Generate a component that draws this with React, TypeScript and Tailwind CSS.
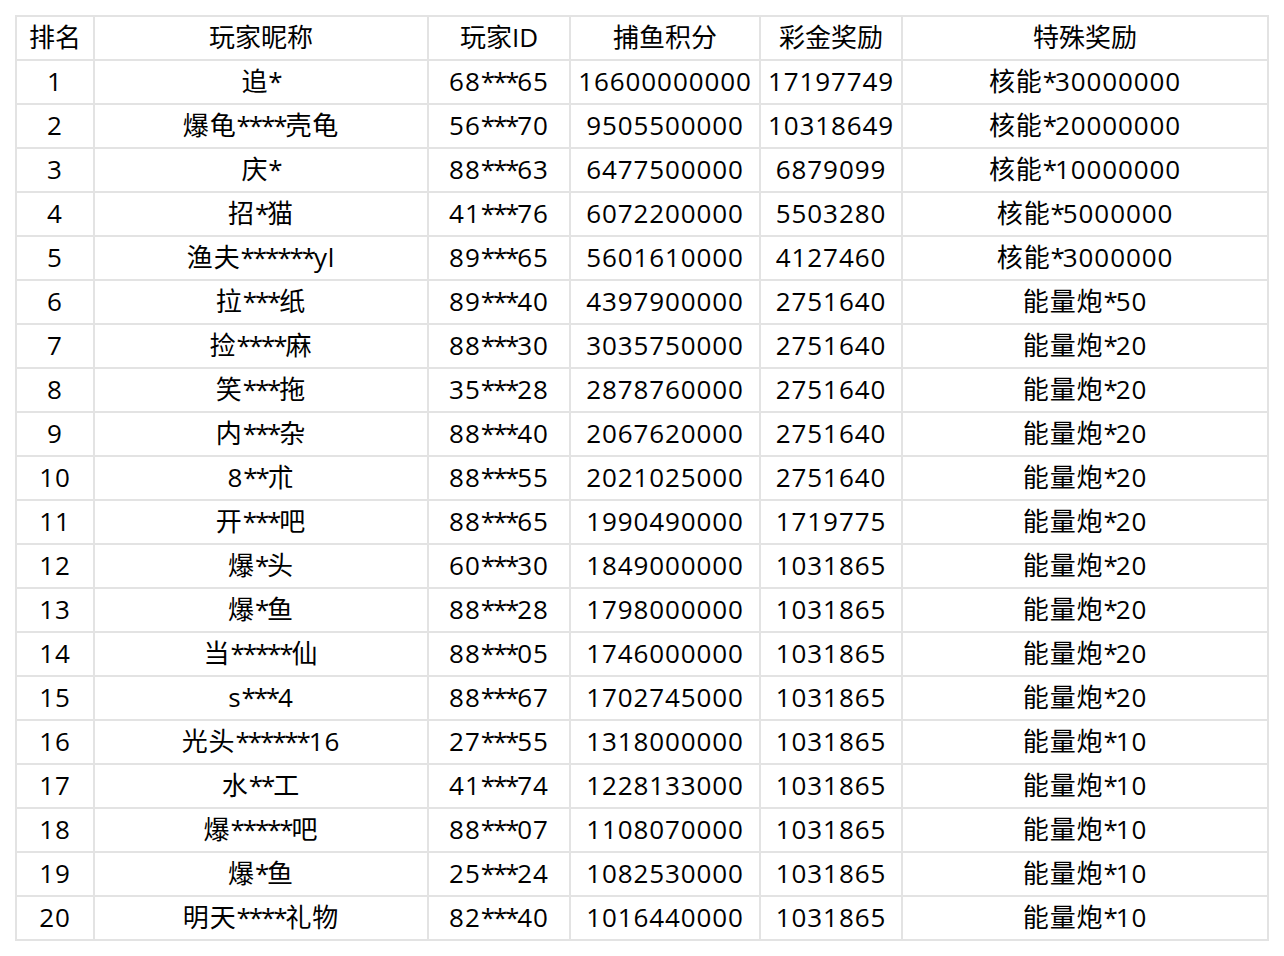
import React from "react";

const header = ["排名", "玩家昵称", "玩家ID", "捕鱼积分", "彩金奖励", "特殊奖励"];

const rows: string[][] = [
    ["1", "追*", "68***65", "16600000000", "17197749", "核能*30000000"],
    ["2", "爆龟****壳龟", "56***70", "9505500000", "10318649", "核能*20000000"],
    ["3", "庆*", "88***63", "6477500000", "6879099", "核能*10000000"],
    ["4", "招*猫", "41***76", "6072200000", "5503280", "核能*5000000"],
    ["5", "渔夫******yl", "89***65", "5601610000", "4127460", "核能*3000000"],
    ["6", "拉***纸", "89***40", "4397900000", "2751640", "能量炮*50"],
    ["7", "捡****麻", "88***30", "3035750000", "2751640", "能量炮*20"],
    ["8", "笑***拖", "35***28", "2878760000", "2751640", "能量炮*20"],
    ["9", "内***杂", "88***40", "2067620000", "2751640", "能量炮*20"],
    ["10", "8**朮", "88***55", "2021025000", "2751640", "能量炮*20"],
    ["11", "开***吧", "88***65", "1990490000", "1719775", "能量炮*20"],
    ["12", "爆*头", "60***30", "1849000000", "1031865", "能量炮*20"],
    ["13", "爆*鱼", "88***28", "1798000000", "1031865", "能量炮*20"],
    ["14", "当*****仙", "88***05", "1746000000", "1031865", "能量炮*20"],
    ["15", "s***4", "88***67", "1702745000", "1031865", "能量炮*20"],
    ["16", "光头******16", "27***55", "1318000000", "1031865", "能量炮*10"],
    ["17", "水**工", "41***74", "1228133000", "1031865", "能量炮*10"],
    ["18", "爆*****吧", "88***07", "1108070000", "1031865", "能量炮*10"],
    ["19", "爆*鱼", "25***24", "1082530000", "1031865", "能量炮*10"],
    ["20", "明天****礼物", "82***40", "1016440000", "1031865", "能量炮*10"],
];

// masked names/ids: the asterisks sit tighter than Open Sans sets them
function Masked({ text }: { text: string }) {
    const parts = text.split(/(\*+)/).filter(Boolean);
    return (
        <>
            {parts.map((p, i) =>
                p.startsWith("*") ? (
                    <span key={i} className="tracking-[-2.1px]">
                        {p}
                    </span>
                ) : (
                    <span key={i}>{p}</span>
                )
            )}
        </>
    );
}

export default function App() {
    return (
        <div className="min-h-screen bg-white pt-[15px] pl-[15px]">
            <div
                className="grid w-fit grid-cols-[76px_332px_140px_188px_140px_364px] auto-rows-[42px] gap-[2px] border-2 border-[#e3e3e3] bg-[#e3e3e3] text-[26px] text-black"
                style={{ fontFamily: '"Open Sans", "Noto Sans CJK SC", sans-serif' }}
            >
                {header.map((h) => (
                    <div key={h} className="flex items-center justify-center bg-white pb-[3px] leading-none">
                        {h}
                    </div>
                ))}
                {rows.map((r) =>
                    r.map((c, j) => (
                        <div
                            key={r[0] + "-" + j}
                            className="flex items-center justify-center whitespace-nowrap bg-white pb-[3px] leading-none tracking-[0.9px]"
                        >
                            <Masked text={c} />
                        </div>
                    ))
                )}
            </div>
        </div>
    );
}
